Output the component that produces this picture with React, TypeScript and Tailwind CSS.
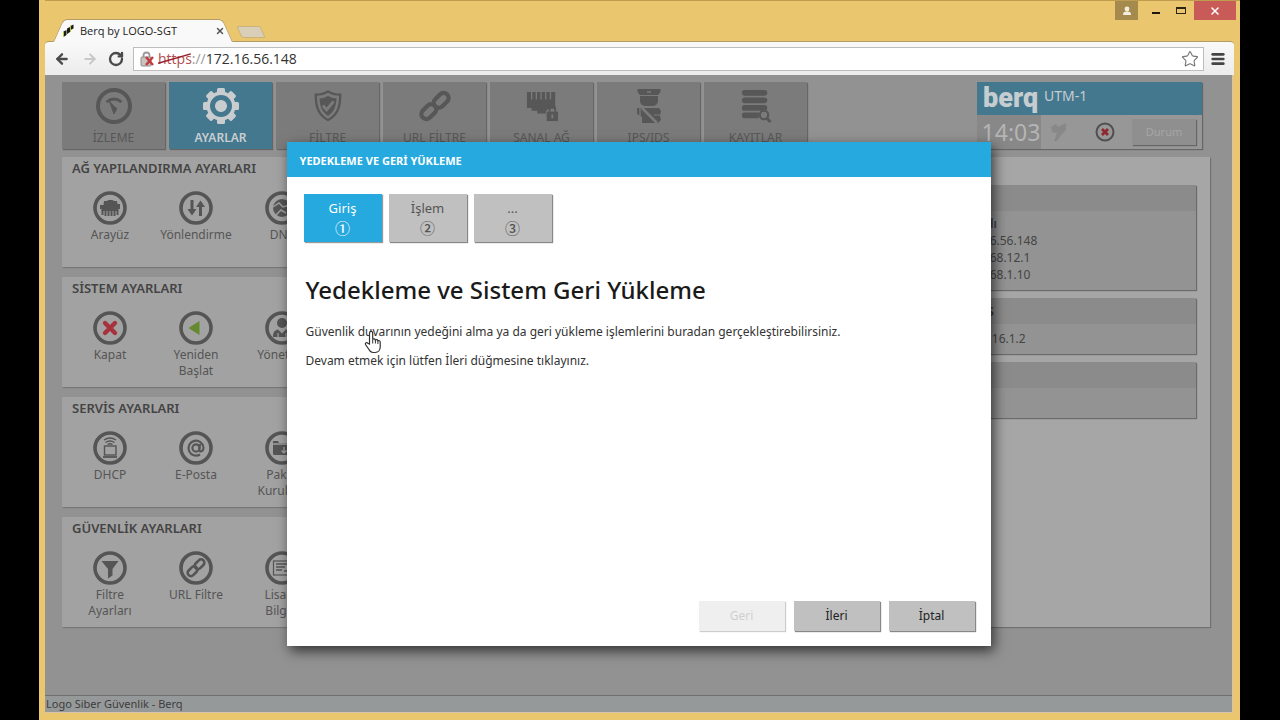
import type { ReactNode } from "react";
import { ArrowLeft, ArrowRight, Menu, RotateCw, Star, X } from "lucide-react";

function GaugeIcon() {
  return (
    <svg viewBox="0 0 36 36" className="size-9" fill="none" stroke="currentColor">
      <circle cx="18" cy="18" r="16" strokeWidth="4" />
      <path d="M10.500 14Q18 8 25.500 14" strokeWidth="2.800" />
      <path d="M13.500 13.500l4.500 12.500 2.500-5z" fill="currentColor" strokeWidth="1" />
      <circle cx="19" cy="21" r="2" fill="currentColor" stroke="none" />
    </svg>
  );
}

function GearIcon() {
  return (
    <svg viewBox="0 0 36 36" className="size-9" fill="currentColor">
      {[0, 45, 90, 135].map((angle) => (
        <rect key={angle} x="14" y="0" width="8" height="36" rx="1.500" transform={`rotate(${angle} 18 18)`} />
      ))}
      <circle cx="18" cy="18" r="14.500" />
      <circle cx="18" cy="18" r="8.500" fill="none" stroke="#44788f" strokeWidth="5" />
      <circle cx="18" cy="18" r="5.500" />
    </svg>
  );
}

function ShieldIcon() {
  return (
    <svg viewBox="0 0 32 34" className="h-8 w-8">
      <path d="M16 1.500C12.500 4 8 5 3 5c0 12 2 21 13 27 11-6 13-15 13-27-5 0-9.500-1-13-3.500z" fill="none" stroke="currentColor" strokeWidth="2.400" />
      <path d="M16 6c-3 2-6 2.600-9 2.800.3 8.500 2.500 14.500 9 18.700 6.500-4.200 8.700-10.200 9-18.700-3-.2-6-.8-9-2.800z" fill="currentColor" />
      <path d="M10.500 16.500l4 4.500 7.500-9" fill="none" stroke="#7b7b7b" strokeWidth="3" />
    </svg>
  );
}

function ChainIcon({ className }: { className: string }) {
  return (
    <svg viewBox="0 0 32 32" className={className} fill="none" stroke="currentColor" strokeWidth="3.800">
      <rect x="14" y="6.500" width="15" height="9" rx="4.500" transform="rotate(-45 21.500 11)" />
      <rect x="3" y="16.500" width="15" height="9" rx="4.500" transform="rotate(-45 10.500 21)" />
    </svg>
  );
}

function PortLockIcon() {
  return (
    <svg viewBox="0 0 36 34" className="h-8 w-9" fill="currentColor">
      <path d="M2 2h30v18h-4c-5 0-6 2-6 5h-9v-3H7v-3H2z" />
      <path d="M7 2v8M12 2v8M17 2v8M22 2v8M27 2v8" stroke="#7b7b7b" strokeWidth="1.400" />
      <rect x="23" y="23" width="12" height="10" />
      <path d="M26 23v-3a3 3 0 0 1 6 0v3" fill="none" stroke="currentColor" strokeWidth="2" />
      <path d="M29 26v4" stroke="#7b7b7b" strokeWidth="2" />
    </svg>
  );
}

function OfficerIcon() {
  return (
    <svg viewBox="0 0 28 36" className="h-9 w-7" fill="currentColor">
      <path d="M2.500 1h23v3l-2.500 3H5L2.500 4zM5 8h18v5c0 3-3 5-6 5h-6c-3 0-6-2-6-5z" />
      <path d="M5 20h19l2 3-1 5 1 4-3 3H7v-6l-5-3V20z" />
      <path d="M7 20l15 15" stroke="#7b7b7b" strokeWidth="2.500" />
      <path d="M5 20v9M19 27h7" stroke="#7b7b7b" strokeWidth="1.200" />
      <path d="M12 4h4" stroke="#7b7b7b" strokeWidth="1.500" />
    </svg>
  );
}

function LogsIcon() {
  return (
    <svg viewBox="0 0 34 36" className="h-9 w-8" fill="currentColor">
      <rect x="2" y="1" width="27" height="6" rx="3" />
      <rect x="2" y="9" width="27" height="6" rx="3" />
      <rect x="2" y="17" width="27" height="6" rx="3" />
      <path d="M5 25h15v6H5a3 3 0 0 1 0-6z" />
      <circle cx="25.500" cy="27.500" r="4.500" fill="none" stroke="currentColor" strokeWidth="2.400" />
      <path d="M28.500 31l4 4" stroke="currentColor" strokeWidth="3" />
    </svg>
  );
}

function Ringed({ children }: { children: ReactNode }) {
  return (
    <svg viewBox="0 0 34 34" className="size-[34px] shrink-0">
      <circle cx="17" cy="17" r="15" fill="none" stroke="currentColor" strokeWidth="3.600" />
      {children}
    </svg>
  );
}

const arayuz = (
  <Ringed>
    <path d="M11 10h3l1.500-1h4l1.500 1h3l.5 3H27v5h-1.500v2H8.500v-2H7v-4h3.500z" fill="currentColor" />
    <path d="M9.500 19v5M12.500 20v5M15.500 20v5M18.500 20v5M21.500 20v5M24.500 19v5" stroke="currentColor" strokeWidth="2" />
  </Ringed>
);
const yonlendirme = (
  <Ringed>
    <path d="M11.500 9h3v9h3l-4.500 6.500L8.500 18h3zM20 25h3v-9h3l-4.500-6.500L17 16h3z" fill="currentColor" />
  </Ringed>
);
const dns = (
  <Ringed>
    <circle cx="17" cy="17" r="9" fill="currentColor" />
    <path d="M8 16l6-4 4 4 7-2M11 24l5-5 5 3" stroke="#a0a0a0" strokeWidth="1.500" fill="none" />
  </Ringed>
);
const kapat = (
  <Ringed>
    <path d="M12 12l10 10M22 12l-10 10" stroke="#a8323c" strokeWidth="4.400" strokeLinecap="round" />
  </Ringed>
);
const yeniden = (
  <Ringed>
    <path d="M9.500 17l11-7v14z" fill="#65892f" />
  </Ringed>
);
const yonetici = (
  <Ringed>
    <circle cx="17" cy="12" r="5" fill="currentColor" />
    <path d="M8 26c0-5 2-7 5-7.500l4 4 4-4c3 .5 5 2.500 5 7.500z" fill="currentColor" />
    <path d="M13 22v4M21 22v4" stroke="#a0a0a0" strokeWidth="1.200" />
  </Ringed>
);
const dhcp = (
  <Ringed>
    <path d="M11 9q6-4 12 0M12.500 11.500q4.500-3 9 0M14.500 13.500q2.500-1.500 5 0" fill="none" stroke="currentColor" strokeWidth="1.400" />
    <rect x="11.500" y="15" width="11.500" height="9" fill="none" stroke="currentColor" strokeWidth="1.400" />
    <path d="M10 26h14" stroke="currentColor" strokeWidth="1.800" />
  </Ringed>
);
const eposta = (
  <Ringed>
    <circle cx="17" cy="17" r="3.600" fill="none" stroke="currentColor" strokeWidth="2.100" />
    <path d="M21 13l-.8 5.500c-.2 3 4.300 2.500 4.300-2A7.500 7.500 0 1 0 21 23.500" fill="none" stroke="currentColor" strokeWidth="2.100" />
  </Ringed>
);
const paket = (
  <Ringed>
    <path d="M8 10h5l1 2h12v12H9l-1-1z" fill="currentColor" />
    <path d="M8 13h18M19 16v6M16.500 19.500l2.500 2.500 2.500-2.500" stroke="#a0a0a0" strokeWidth="1.400" fill="none" />
  </Ringed>
);
const filtre = (
  <Ringed>
    <path d="M8.500 10h17l-6 8v6.500L15 27.500V18z" fill="currentColor" />
  </Ringed>
);
const urlFiltre = (
  <Ringed>
    <g fill="none" stroke="currentColor" strokeWidth="2.600">
      <rect x="15" y="10" width="11" height="6.500" rx="3.250" transform="rotate(-45 20.500 13.250)" />
      <rect x="8" y="17" width="11" height="6.500" rx="3.250" transform="rotate(-45 13.500 20.250)" />
    </g>
  </Ringed>
);
const lisans = (
  <Ringed>
    <rect x="8.500" y="10" width="17" height="14" fill="none" stroke="currentColor" strokeWidth="1.200" />
    <path d="M11 13h13M11 16h9M11 19h6M19 20h4" stroke="currentColor" strokeWidth="1.300" />
  </Ringed>
);

const tabs = [
  { label: "İZLEME", icon: <GaugeIcon /> },
  { label: "AYARLAR", icon: <GearIcon />, active: true },
  { label: "FİLTRE", icon: <ShieldIcon /> },
  { label: "URL FİLTRE", icon: <ChainIcon className="size-9" /> },
  { label: "SANAL AĞ", icon: <PortLockIcon /> },
  { label: "IPS/IDS", icon: <OfficerIcon /> },
  { label: "KAYITLAR", icon: <LogsIcon /> },
];

const groups = [
  {
    title: "AĞ YAPILANDIRMA AYARLARI",
    items: [
      { lines: ["Arayüz"], icon: arayuz },
      { lines: ["Yönlendirme"], icon: yonlendirme },
      { lines: ["DNS"], icon: dns },
    ],
  },
  {
    title: "SİSTEM AYARLARI",
    items: [
      { lines: ["Kapat"], icon: kapat },
      { lines: ["Yeniden", "Başlat"], icon: yeniden },
      { lines: ["Yönetimi"], icon: yonetici },
    ],
  },
  {
    title: "SERVİS AYARLARI",
    items: [
      { lines: ["DHCP"], icon: dhcp },
      { lines: ["E-Posta"], icon: eposta },
      { lines: ["Paket", "Kurulum"], icon: paket },
    ],
  },
  {
    title: "GÜVENLİK AYARLARI",
    items: [
      { lines: ["Filtre", "Ayarları"], icon: filtre },
      { lines: ["URL Filtre"], icon: urlFiltre },
      { lines: ["Lisans", "Bilgisi"], icon: lisans },
    ],
  },
];

function BrowserChrome() {
  return (
    <header className="font-['Open_Sans',sans-serif]">
      <div className="flex h-[42px] items-start justify-between border-t border-[#c09c50]">
        <div className="flex h-full items-end pl-2">
          <div className="relative z-10 flex h-[23px] w-[180px] items-center">
            <span className="absolute inset-y-0 left-0 w-1/2 origin-bottom -skew-x-[24deg] rounded-tl-[5px] border-t border-l border-[#b39b62] bg-[#f9f9f9]" />
            <span className="absolute inset-y-0 right-0 w-1/2 origin-bottom skew-x-[24deg] rounded-tr-[5px] border-t border-r border-[#b39b62] bg-[#f9f9f9]" />
            <div className="relative flex w-full items-center gap-[5px] pr-2 pl-2">
              <svg viewBox="0 0 14 14" className="size-3.5">
                <path d="M2.500 13V7.500l3-1.500v5zM6 10V4.500l3-1.500v5zM9.500 6V2l3-1.500v4z" fill="#1c1c12" />
                <path d="M2.500 13V8M9.500 8V1.500" stroke="#b7c832" strokeWidth="1" />
              </svg>
              <span className="flex-1 text-[11px] leading-4 whitespace-nowrap text-[#222]">Berq by LOGO-SGT</span>
              <button type="button" aria-label="Sekmeyi kapat" className="text-[#555]">
                <X className="size-2.5" strokeWidth={3.5} />
              </button>
            </div>
          </div>
          <button type="button" aria-label="Yeni sekme" className="mb-1 ml-1.5 h-3 w-6 skew-x-[24deg] rounded-xs border border-[#c9b37c] bg-[#d9cfb8]" />
        </div>
        <div className="flex h-[19px] items-stretch pr-1">
          <button type="button" aria-label="Kullanıcı" className="mr-1.5 flex w-[23px] items-center justify-center bg-[#a58a4e] text-[#f2eddf]">
            <svg viewBox="0 0 10 10" className="size-2.5" fill="currentColor">
              <circle cx="5" cy="3" r="2.400" />
              <path d="M1 9c0-3 1.500-3.500 4-3.500S9 6 9 9z" />
            </svg>
          </button>
          <button type="button" aria-label="Simge durumuna küçült" className="flex w-6 items-end justify-center pb-1.5">
            <span className="h-0.5 w-2 bg-[#1c1710]" />
          </button>
          <button type="button" aria-label="Ekranı kapla" className="flex w-[26px] items-center justify-center">
            <span className="h-[7px] w-2.5 border border-t-2 border-[#2b2415]" />
          </button>
          <button type="button" aria-label="Kapat" className="flex w-[42px] items-center justify-center bg-[#c85a58] text-white">
            <X className="size-3" strokeWidth={3} />
          </button>
        </div>
      </div>
      <div className="-mt-px mr-1.5 flex h-[34px] items-center rounded-t border-t border-[#b39b62] bg-linear-to-b from-[#f9f9f9] to-[#ececec] pr-2">
        <div className="flex items-center gap-3 px-[9px] text-[#4a4a4a]">
          <button type="button" aria-label="Geri git">
            <ArrowLeft className="size-4" strokeWidth={3.5} />
          </button>
          <button type="button" aria-label="İleri git" className="-mr-0.5 text-[#c8c8c8]">
            <ArrowRight className="size-4" strokeWidth={3} />
          </button>
          <button type="button" aria-label="Yenile">
            <RotateCw className="size-4" strokeWidth={3.5} />
          </button>
        </div>
        <div className="flex h-6 flex-1 items-center border border-[#bdbdbd] bg-white pr-1 pl-1.5">
          <svg viewBox="0 0 16 16" className="size-4">
            <path d="M3.500 7V4.500a3 3 0 0 1 6 0V7" fill="none" stroke="#9a9a9a" strokeWidth="1.800" />
            <rect x="1" y="6" width="10" height="9" rx="1" fill="#c9c2bd" stroke="#8f8f8f" />
            <path d="M6 6l7 8M13 6l-7 8" stroke="#c03a3e" strokeWidth="2.400" />
          </svg>
          <p className="flex-1 pl-0.5 text-sm leading-5 text-[#333]">
            <span className="relative text-[#b05050]">
              https
              <svg viewBox="0 0 34 14" preserveAspectRatio="none" className="absolute inset-x-0 top-1 h-3 w-full">
                <path d="M0 12L33 1" stroke="#98202c" strokeWidth="1.800" />
              </svg>
            </span>
            <span className="text-[#999]">://</span>172.16.56.148
          </p>
          <button type="button" aria-label="Yer imi ekle" className="text-[#777]">
            <Star className="size-[18px]" strokeWidth={1.5} />
          </button>
        </div>
        <button type="button" aria-label="Menü" className="ml-1.5 text-[#444]">
          <Menu className="size-4" strokeWidth={4} />
        </button>
      </div>
    </header>
  );
}

function DeviceStatus() {
  return (
    <section className="flex h-[67px] w-[225px] flex-col shadow-[1px_1px_1px_#666]">
      <div className="flex h-[33px] items-center gap-1.5 bg-[#44788f] pl-1.5 text-[#c6cdd0]">
        <span className="font-['Roboto',sans-serif] text-[27px] leading-6 font-black">berq</span>
        <span className="pb-1 text-sm">UTM-1</span>
      </div>
      <div className="flex flex-1 items-center bg-[#979797] pr-1.5">
        <time className="flex h-full w-16 items-center justify-center bg-[#888] pl-1 text-[23px] text-[#b5b5b5]">14:03</time>
        <svg viewBox="0 0 20 20" className="ml-2 size-5" fill="#888">
          <path d="M2 5l5-3 2 3 8-4v7l-5 5-4 6H5l3-8-5-1z" />
        </svg>
        <button type="button" aria-label="Durdur" className="ml-[26px] text-[#505050]">
          <svg viewBox="0 0 20 20" className="size-5">
            <circle cx="10" cy="10" r="8.500" fill="none" stroke="currentColor" strokeWidth="2" />
            <path d="M7 7l6 6M13 7l-6 6" stroke="#8f2930" strokeWidth="2.800" />
          </svg>
        </button>
        <button type="button" className="ml-auto h-[26px] w-16 bg-[#8f8f8f] text-[11px] text-[#a6a6a6] shadow-[1px_1px_1px_#666]">Durum</button>
      </div>
    </section>
  );
}

function InfoCard({ title, children }: { title: string; children?: ReactNode }) {
  return (
    <section className="bg-[#939393] shadow-[1px_1px_1px_#6b6b6b]">
      <h3 className="h-[26px] w-full bg-[#8b8b8b] pl-[43px] text-[13px] leading-[26px] font-semibold text-[#3b3b3b]">{title}</h3>
      <div className="min-h-[30px] text-xs leading-[17px] text-[#444]">{children}</div>
    </section>
  );
}

function Dashboard() {
  return (
    <main className="flex flex-1 flex-col gap-2 pt-[7px] pr-[22px] pb-[68px] pl-[17px]">
      <div className="flex items-start justify-between pr-2">
        <nav className="flex gap-1">
          {tabs.map((tab) => (
            <button
              key={tab.label}
              type="button"
              className={
                tab.active
                  ? "flex h-[67px] w-[103px] flex-col items-center justify-between bg-[#44788f] pt-1.5 text-xs leading-[18px] font-semibold text-[#c9cdcf] shadow-[1px_1px_1px_#666]"
                  : "flex h-[67px] w-[103px] flex-col items-center justify-between bg-[#7b7b7b] pt-1.5 text-xs leading-[18px] text-[#575757] shadow-[1px_1px_1px_#666]"
              }
            >
              <span className="flex h-9 items-center">{tab.icon}</span>
              <span className="pb-0.5">{tab.label}</span>
            </button>
          ))}
        </nav>
        <DeviceStatus />
      </div>
      <div className="flex flex-1 gap-4">
        <div className="flex flex-1 flex-col gap-2.5">
          {groups.map((group) => (
            <section key={group.title} className="h-[110px] bg-[#a2a2a2] pt-px pl-[5px] shadow-[1px_1px_1px_#777]">
              <h2 className="pl-[5px] text-[13px] leading-5 font-semibold text-[#444]">{group.title}</h2>
              <div className="flex pt-[13px]">
                {group.items.map((item) => (
                  <button key={item.lines[0]} type="button" className="flex w-[86px] flex-col items-center text-[#555]">
                    {item.icon}
                    <span className="flex flex-col items-center pt-0.5 text-xs leading-4 whitespace-nowrap">
                      {item.lines.map((line) => (
                        <span key={line}>{line}</span>
                      ))}
                    </span>
                  </button>
                ))}
              </div>
            </section>
          ))}
        </div>
        <aside className="flex w-[300px] flex-col gap-2 bg-[#a6a6a6] px-3.5 pt-7 shadow-[1px_1px_1px_#707070]">
          <InfoCard title="">
            <div className="pt-1 pb-[7px] pl-[35px]">
              <p className="w-[38px] text-right font-semibold">Adı</p>
              <p>172.16.56.148</p>
              <p>192.168.12.1</p>
              <p>192.168.1.10</p>
            </div>
          </InfoCard>
          <InfoCard title="DNS">
            <p className="pt-1.5 pb-[7px] pl-[44px]">172.16.1.2</p>
          </InfoCard>
          <InfoCard title="" />
        </aside>
      </div>
    </main>
  );
}

const steps = [
  { label: "Giriş", mark: "①", active: true },
  { label: "İşlem", mark: "②" },
  { label: "...", mark: "③" },
];

function HandCursor() {
  return (
    <svg viewBox="0 0 18 24" className="absolute top-[188px] left-[77px] h-6 w-[18px]">
      <path
        d="M5.500 14V3a1.600 1.600 0 0 1 3.200 0v6.500c.5-1 2.500-.9 2.700.5.600-.8 2.300-.5 2.500.8.900-.6 2.300-.1 2.300 1.400V17c0 3-2 5.500-5 5.500H9c-2 0-3-1-4-3L1.500 14.500c-.7-1.600 1.300-2.500 2.300-1.300z"
        fill="#fff"
        stroke="#333"
        strokeWidth="1.200"
      />
      <path d="M8.700 9.500v4M11.400 10v3.500M13.900 11v3" stroke="#333" />
    </svg>
  );
}

function BackupDialog() {
  return (
    <div className="absolute inset-0 flex items-center justify-center">
      <div role="dialog" aria-labelledby="dialog-title" className="relative flex min-h-[504px] w-[704px] flex-col bg-white shadow-[3px_5px_12px_rgba(0,0,0,0.65)]">
        <h2 id="dialog-title" className="bg-[#26a9de] px-[13px] pt-[3px] text-[11px] leading-8 font-bold text-white">
          YEDEKLEME VE GERİ YÜKLEME
        </h2>
        <ol className="flex gap-[7px] px-[17px] pt-[17px]">
          {steps.map((step) => (
            <li key={step.label}>
              <button
                type="button"
                className={
                  step.active
                    ? "flex h-12 w-[78px] flex-col items-center justify-center bg-[#26a9de] text-[13px] leading-5 text-white shadow-[1px_1px_1px_#999]"
                    : "flex h-12 w-[78px] flex-col items-center justify-center bg-[#c0c0c0] text-[13px] leading-5 text-[#555] shadow-[1px_1px_1px_#888]"
                }
              >
                <span>{step.label}</span>
                <span className="font-['Noto_Sans_CJK_JP',sans-serif] text-[15px] leading-5 font-medium">{step.mark}</span>
              </button>
            </li>
          ))}
        </ol>
        <div className="flex-1 px-[19px] pt-7">
          <h1 className="text-2xl leading-10 font-medium text-[#1a1a1a]">Yedekleme ve Sistem Geri Yükleme</h1>
          <p className="pt-3 text-xs leading-5 text-[#333]">
            Güvenlik duvarının yedeğini alma ya da geri yükleme işlemlerini buradan gerçekleştirebilirsiniz.
          </p>
          <p className="pt-[9px] text-xs leading-5 text-[#333]">Devam etmek için lütfen İleri düğmesine tıklayınız.</p>
        </div>
        <div className="flex justify-end gap-[9px] pr-4 pb-[15px] text-xs">
          <button type="button" disabled className="h-[30px] w-[86px] bg-[#efefef] text-[#cfcfcf] shadow-[1px_1px_1px_#ccc]">Geri</button>
          <button type="button" className="h-[30px] w-[86px] bg-[#c0c0c0] text-[#222] shadow-[1px_1px_1px_#888]">İleri</button>
          <button type="button" className="h-[30px] w-[86px] bg-[#c0c0c0] text-[#222] shadow-[1px_1px_1px_#888]">İptal</button>
        </div>
        <HandCursor />
      </div>
    </div>
  );
}

export default function App() {
  return (
    <div className="flex min-h-screen bg-black pr-10 pl-[39px] font-['Noto_Sans',sans-serif]">
      <div className="flex flex-1 flex-col bg-[#eac66e] pb-[7px] pl-1.5">
        <BrowserChrome />
        <div className="relative mr-[7px] flex flex-1 flex-col border-r border-b border-[#d9c4b0] bg-[#929292]">
          <Dashboard />
          <footer className="h-[17px] border-t border-[#6d7172] bg-[#969999] pl-px text-[11px] leading-4 text-[#3d3d3d]">
            Logo Siber Güvenlik - Berq
          </footer>
          <BackupDialog />
        </div>
      </div>
    </div>
  );
}
